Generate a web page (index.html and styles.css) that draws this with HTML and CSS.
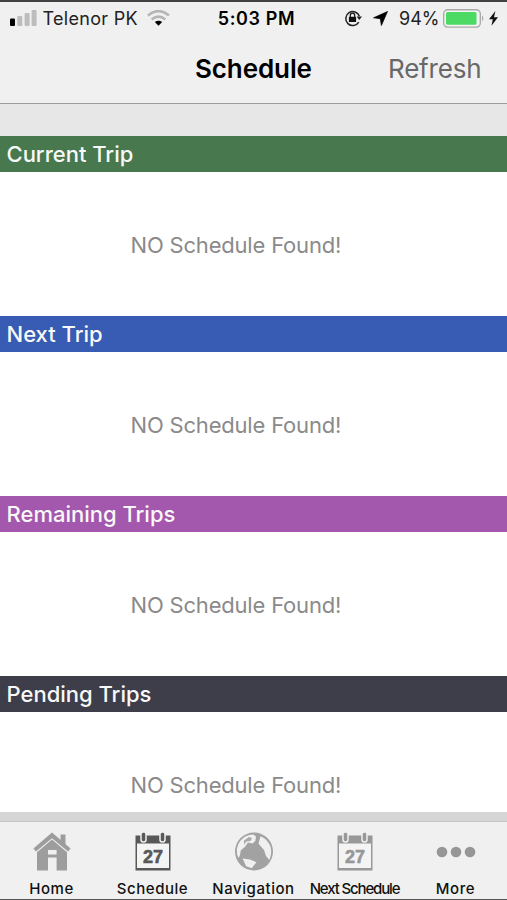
FILE: index.html
```html
<!DOCTYPE html>
<html lang="en">
<head>
<meta charset="utf-8">
<title>Schedule</title>
<link rel="stylesheet" href="styles.css">
</head>
<body>
<div class="screen">
  <header class="top">
    <div class="status">
      <div class="status-left">
        <svg class="signal" width="28" height="17" viewBox="0 0 28 17"><rect x="0" y="8.5" width="5" height="7.5" rx="1" fill="#000"/><rect x="7.3" y="6" width="5" height="10" rx="1" fill="#bdbdbd"/><rect x="14.6" y="3" width="5" height="13" rx="1" fill="#bdbdbd"/><rect x="21.6" y="0" width="5" height="16" rx="1" fill="#bdbdbd"/></svg>
        <span class="carrier">Telenor PK</span>
        <svg class="wifi" width="23" height="16" viewBox="0 0 23 16"><g fill="none" stroke="#b5b5b5" stroke-width="2.7"><path d="M1 5.5Q11.5-3.2 22 5.5"/><path d="M4.7 9.5Q11.5 3.8 18.3 9.5"/></g><path d="M7.8 12Q11.5 9.3 15.2 12L11.5 15.8Z" fill="#000"/></svg>
      </div>
      <span class="time">5:03 PM</span>
      <div class="status-right">
        <svg class="lock" width="18" height="18" viewBox="0 0 18 18"><path d="M14.8 13.2A7 7 0 1 1 15.4 7.3" fill="none" stroke="#222" stroke-width="1.5"/><path d="M12.6 7.5H18L15.3 11Z" fill="#222"/><rect x="4.9" y="7.8" width="7.2" height="5.3" rx=".7" fill="#111"/><path d="M6.3 8V6.4a2.2 2.2 0 0 1 4.4 0V8" fill="none" stroke="#111" stroke-width="1.2"/></svg>
        <svg class="location" width="15" height="15" viewBox="0 0 15 15"><path d="M14.5.5 8.4 14.5 7.3 7.7.5 6.8Z" fill="#000" stroke="#000" stroke-width=".7" stroke-linejoin="round"/></svg>
        <span class="percent">94%</span>
        <svg class="battery" width="42" height="19" viewBox="0 0 42 19"><rect x=".7" y=".7" width="36.6" height="17.4" rx="4" fill="#f5f5f5" stroke="#a9a9a9" stroke-width="1.4"/><rect x="3" y="3" width="30.5" height="12.8" rx="1.5" fill="#4cd964"/><path d="M39 6.3Q41.6 9.2 39 12.2Z" fill="#a5a5a5"/></svg>
        <svg class="bolt" width="9" height="15" viewBox="0 0 9 15"><path d="M6.4 0 0 8.3H3.8L2.5 14.7 9 6.2H5Z" fill="#111"/></svg>
      </div>
    </div>
    <nav class="navbar">
      <h1 class="title">Schedule</h1>
      <span class="refresh">Refresh</span>
    </nav>
  </header>
  <main class="content">
    <section class="trip"><h2 class="trip-head current">Current Trip</h2><p class="empty">NO Schedule Found!</p></section>
    <section class="trip"><h2 class="trip-head next">Next Trip</h2><p class="empty">NO Schedule Found!</p></section>
    <section class="trip"><h2 class="trip-head remaining">Remaining Trips</h2><p class="empty">NO Schedule Found!</p></section>
    <section class="trip"><h2 class="trip-head pending">Pending Trips</h2><p class="empty">NO Schedule Found!</p></section>
  </main>
  <footer class="tabbar">
    <div class="tab">
      <svg class="icon" width="40" height="40" viewBox="0 0 40 40"><g fill="#9d9d9d"><path d="M28.5 2.5h5V13l-5-4.5Z"/><path d="m20 .6 18.6 15.8-2.6 3.2L20 6.2 4 19.6l-2.6-3.2Z"/><path fill-rule="evenodd" d="M20 7.6 35 20.2V38.4H24.6V25.6H16V38.4H5V20.2ZM16 18v4.4h8.6V18Z"/></g></svg>
      <span class="label">Home</span>
    </div>
    <div class="tab dark">
      <svg class="icon" width="40" height="40" viewBox="0 0 40 40"><path d="M2.5 3.5h35V38.5H2.5Z" fill="currentColor"/><path d="M4 11.5h32V36H4Z" fill="#f4f4f4"/><g fill="currentColor" stroke="#f0f0f0" stroke-width="1.5"><rect x="8" y="0" width="5" height="10" rx="2.2"/><rect x="27" y="0" width="5" height="10" rx="2.2"/></g><text class="date" x="20" y="30.5" text-anchor="middle">27</text></svg>
      <span class="label">Schedule</span>
    </div>
    <div class="tab">
      <svg class="icon" width="40" height="40" viewBox="0 0 40 40"><circle cx="20" cy="19.5" r="19" fill="#a2a2a2"/><g fill="#f0f0f0"><path d="M3.2 23Q1.8 15 6 9.2 11 2.8 19.3 2.6L22 4.5 21.3 9 18.5 11.5 14 10.5 11 14.7 6.7 18.5 6 23 4.6 26Z"/><path d="M26.5 4.2Q34 7 36.8 15.5 38 22 35.3 28L32 24 30 18 26.5 14 24.5 11.5Z"/><path d="m8.5 26.5 7.5 1 6.5 2.7-4.8 6-5.5-2Z"/></g><path d="m10 8.5 5-3.5 3 1-1.5 3-4 .5-2.5 3Z" fill="#a9a9a9"/></svg>
      <span class="label">Navigation</span>
    </div>
    <div class="tab">
      <svg class="icon" width="40" height="40" viewBox="0 0 40 40"><path d="M2.5 3.5h35V38.5H2.5Z" fill="currentColor"/><path d="M4 11.5h32V36H4Z" fill="#f4f4f4"/><g fill="currentColor" stroke="#f0f0f0" stroke-width="1.5"><rect x="8" y="0" width="5" height="10" rx="2.2"/><rect x="27" y="0" width="5" height="10" rx="2.2"/></g><text class="date" x="20" y="30.5" text-anchor="middle">27</text></svg>
      <span class="label next-schedule">Next Schedule</span>
    </div>
    <div class="tab">
      <svg class="icon" width="40" height="40" viewBox="0 0 40 40"><g fill="#969696"><circle cx="6" cy="20" r="5.3"/><circle cx="20" cy="20" r="5.3"/><circle cx="34" cy="20" r="5.3"/></g></svg>
      <span class="label">More</span>
    </div>
  </footer>
</div>
</body>
</html>
```
FILE: styles.css
```css
* { box-sizing: border-box; }
body { margin: 0; background: #fff; font-family: Inter, "Liberation Sans", sans-serif; }
.screen { display: flex; flex-direction: column; width: 507px; height: 900px; overflow: hidden; border-top: 2px solid #424143; border-bottom: 1px solid #555; }
.top { flex: none; height: 102px; background: #f0f0f0; border-bottom: 1px solid #9c9c9c; }
.status { display: grid; grid-template-columns: 200px 1fr 200px; height: 32px; align-items: center; font-size: 18px; color: #222; }
.status svg { flex: none; }
.status-left { display: flex; align-items: center; padding-left: 10px; }
.carrier { width: 105px; padding-left: 4.5px; white-space: nowrap; letter-spacing: .3px; }
.wifi { margin-left: 4px; }
.time { text-align: center; font-weight: 600; color: #000; letter-spacing: .6px; padding-left: 6px; white-space: nowrap; }
.status-right { display: flex; align-items: center; padding-left: 37px; }
.location { margin-left: 11px; }
.percent { flex: none; width: 54px; padding-left: 11px; }
.battery { margin-left: 1px; }
.bolt { margin-left: 4px; }
.navbar { display: grid; grid-template-columns: 1fr 117px 1fr; height: 69px; align-items: center; }
.title { grid-column: 2; margin: 0; font-size: 26px; font-weight: 600; line-height: 32px; letter-spacing: -.1px; color: #000; white-space: nowrap; }
.refresh { font-size: 26px; line-height: 32px; color: #686868; padding-left: 76px; white-space: nowrap; letter-spacing: -.2px; }
.content { flex: none; height: 708px; padding-top: 32px; overflow: hidden; background: #e7e7e7; }
.trip { height: 180px; background: #fff; }
.trip-head { margin: 0; height: 36px; padding: 1px 0 0 6.5px; font-size: 22px; line-height: 35px; font-weight: 550; color: #f8f8f8; }
.current { background: #48784e; }
.next { background: #385bb3; }
.remaining { background: #a357ad; }
.pending { background: #3d3e49; }
.empty { margin: 0; padding: 59px 0 0 130.5px; font-size: 22px; line-height: 28px; letter-spacing: -.19px; color: #8a8a8a; white-space: nowrap; }
.tabbar { flex: 1; display: grid; grid-template-columns: repeat(5, 101px); justify-content: center; border-top: 9px solid #d6d6d6; background: #f0f0f0; box-shadow: inset 0 1px #c4c4c4; }
.tab { display: flex; flex-direction: column; align-items: center; padding-top: 11px; color: #989898; }
.dark { color: #585858; }
.icon { display: block; }
.date { font: 700 18px "Liberation Sans", sans-serif; fill: currentColor; stroke: currentColor; stroke-width: .6px; }
.label { margin-top: 6px; font-size: 15px; line-height: 21px; font-weight: 550; letter-spacing: .55px; color: #111; white-space: nowrap; }
.next-schedule { letter-spacing: -1.15px; }
```
